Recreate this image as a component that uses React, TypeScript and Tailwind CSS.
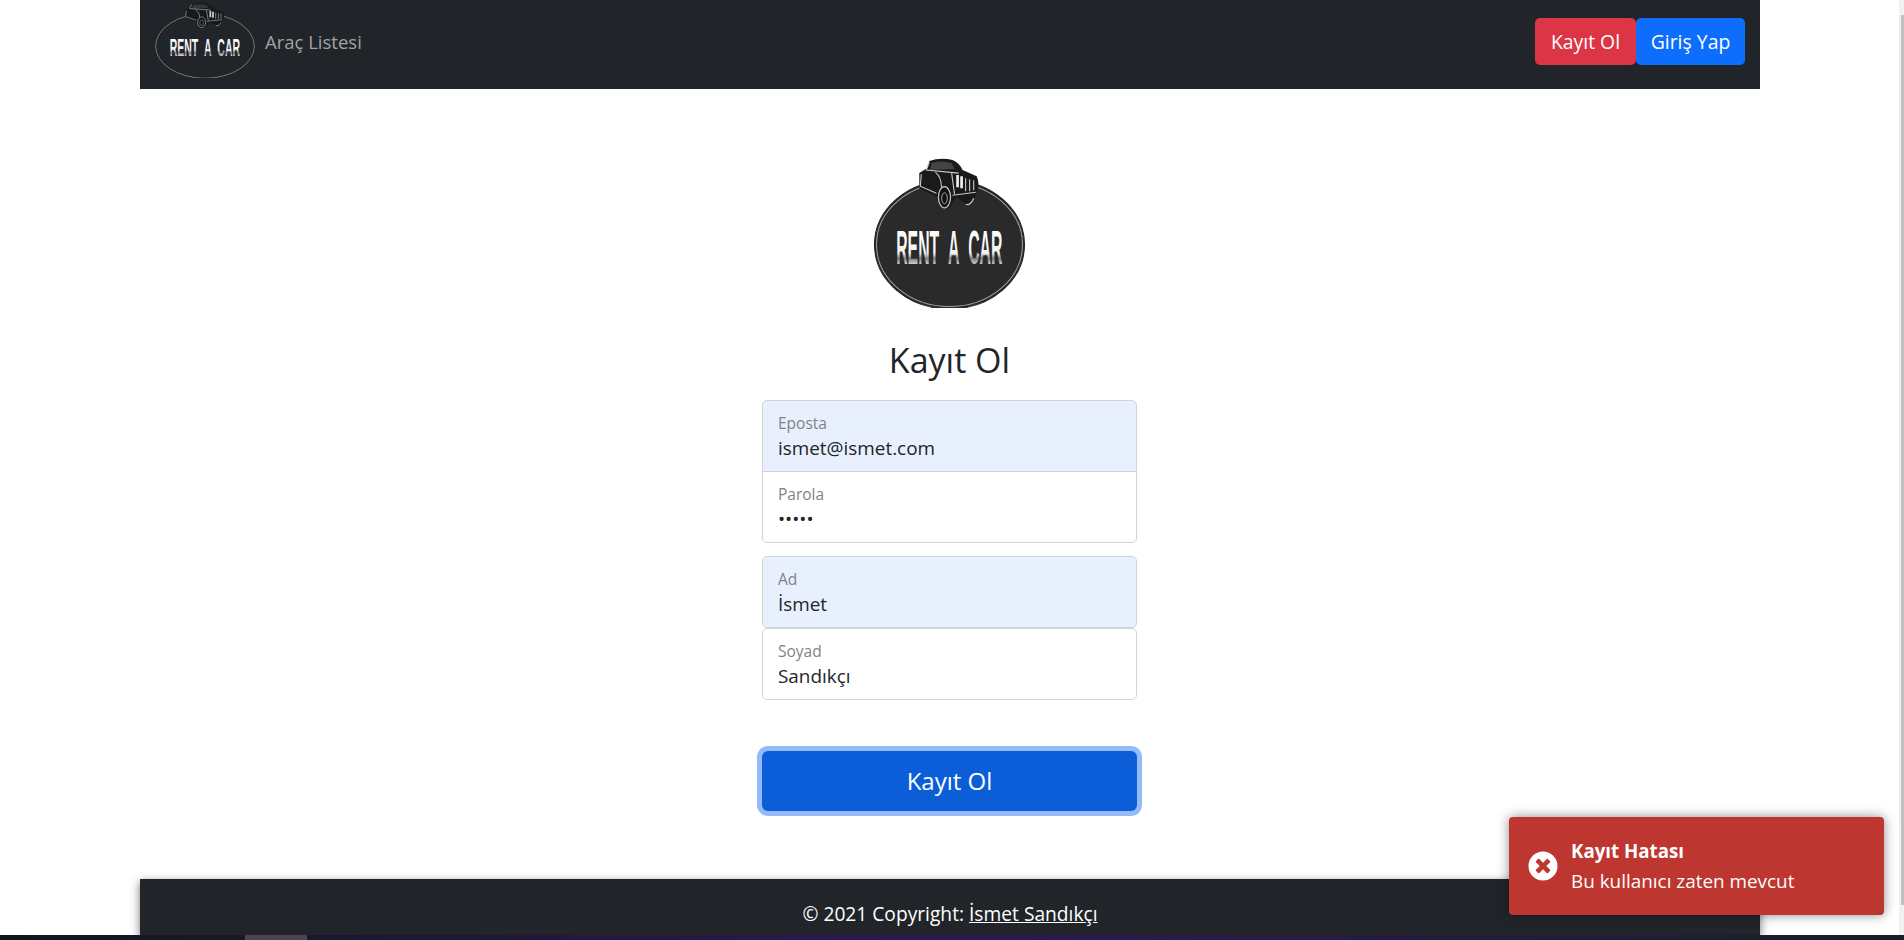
import { FaTimesCircle } from "react-icons/fa";

const font = "font-['Open_Sans','Liberation_Sans',sans-serif]";

const Logo = ({ onDark, className }: { onDark?: boolean; className: string }) => {
  const truckFill = onDark ? "#17191c" : "#1a1a1a";
  const shine = onDark ? "#a9abad" : "#c9c9c9";
  const gradient = onDark ? "letterSmall" : "letterBig";
  return (
    <svg viewBox="0 0 150 150" preserveAspectRatio="none" className={className}>
      <defs>
        <linearGradient id={gradient} x1="0" y1="0" x2="0" y2="1">
          <stop offset="0" stopColor="#ffffff" />
          <stop offset="0.6" stopColor="#f2f2f2" />
          <stop offset="0.7" stopColor="#7d7d7d" />
          <stop offset="0.84" stopColor="#e8e8e8" />
          <stop offset="1" stopColor="#ffffff" />
        </linearGradient>
      </defs>
      <ellipse cx="75" cy="87" rx="74.5" ry="64" fill={onDark ? "#212529" : "#2a2a2a"} stroke={onDark ? "none" : "#1c1c1c"} />
      <ellipse
        cx="75"
        cy="87"
        rx={onDark ? 74 : 72.5}
        ry={onDark ? 63.5 : 61.5}
        fill="none"
        stroke={onDark ? "#85888a" : "#a0a0a0"}
        strokeWidth={onDark ? 1.4 : 1}
      />
      {/* truck */}
      <path
        d="M55 4 Q66 0 78 3 Q85 6 88 13 L102 19 Q105 26 103 33 L97 48 L90 46 L82 40 L75 51 L67 51 L63 40 L45 31 L45 16 L53 11 Z"
        fill={truckFill}
      />
      <path d="M57 6 Q66 3 77 6 L80 12 L56 13 Z" fill={onDark ? "#34373b" : "#444444"} />
      <path d="M47 17 L46 29 L62 36 M55 5 L52 13 L84 16 M61 15 Q67 20 67 30 M77 15 L80 37" stroke={shine} strokeWidth="1.1" fill="none" />
      <path d="M83 18 L83 30 M87 19 L87 31" stroke={onDark ? "#d0d1d2" : "#f4f4f4"} strokeWidth="2.6" />
      <path d="M91 21 L91 34 M95 22 L95 34 M99 23 L99 33" stroke={shine} strokeWidth="1.1" />
      <path d="M78 38 L101 35" stroke={shine} strokeWidth="1" fill="none" />
      <ellipse cx="70" cy="40" rx="6" ry="10.5" fill="#111" stroke={shine} strokeWidth="1.2" />
      <ellipse cx="70" cy="41" rx="2.8" ry="5.5" fill="none" stroke={shine} strokeWidth="0.8" />
      <path d="M91 47 Q96 49 99 41" fill="none" stroke={shine} strokeWidth="1.2" />
      <text
        transform="translate(22 106) scale(1.1 2.94)"
        textLength="96"
        lengthAdjust="spacingAndGlyphs"
        wordSpacing="5"
        fontFamily="'Liberation Sans', sans-serif"
        fontWeight="700"
        fontSize="16"
        fill={`url(#${gradient})`}
      >
        RENT A CAR
      </text>
    </svg>
  );
};

const Field = ({
  label,
  value,
  type = "text",
  filled,
  rounded,
}: {
  label: string;
  value: string;
  type?: string;
  filled?: boolean;
  rounded: string;
}) => (
  <div className={`flex h-[72px] flex-col justify-center border border-[#ced4da] pl-[15px] pr-4 ${filled ? "bg-[#e8f0fe]" : "bg-white"} ${rounded}`}>
    <label className="text-[15.5px] leading-[22px] text-[#7f8387]">{label}</label>
    <input
      type={type}
      defaultValue={value}
      readOnly
      className="mt-[1px] h-[26px] w-full bg-transparent text-[18.9px] leading-[26px] text-[#212529] outline-none"
    />
  </div>
);

export default function App() {
  return (
    <div className={`relative flex h-[940px] w-full flex-col overflow-hidden bg-white ${font}`}>
      <div className="flex h-[935px] min-h-0">
        <div className="min-w-0 flex-1">
          <div className="ml-[140px] flex h-[935px] w-[1620px] flex-col">
            <nav className="flex h-[89px] items-start justify-between bg-[#212529] pl-[15px] pr-[15px]">
              <div className="flex items-center">
                <Logo onDark className="mt-[2px] h-[76px] w-[100px]" />
                <a href="#" className="ml-[10px] mt-[5px] text-[18.5px] text-[#a0a2a4]">
                  Araç Listesi
                </a>
              </div>
              <div className="mt-[18px] flex">
                <button className="h-[47px] w-[101px] rounded-[5px] bg-[#dc3545] text-[19.4px] text-white">Kayıt Ol</button>
                <button className="h-[47px] w-[109px] rounded-[5px] bg-[#0d6efd] text-[19.4px] text-white">Giriş Yap</button>
              </div>
            </nav>

            <main className="flex flex-1 flex-col items-center pr-[1px] pt-[68px]">
              <Logo className="h-[151px] w-[151px]" />
              <h1 className="mb-[19px] mt-[31px] text-[34px] leading-[42px] text-[#212529]">Kayıt Ol</h1>
              <form className="w-[375px]">
                <div className="mb-[13px]">
                  <Field label="Eposta" value="ismet@ismet.com" filled rounded="rounded-t-[5px]" />
                  <Field label="Parola" value="12345" type="password" rounded="-mt-px rounded-b-[5px]" />
                </div>
                <Field label="Ad" value="İsmet" filled rounded="rounded-[5px]" />
                <Field label="Soyad" value="Sandıkçı" rounded="rounded-[5px]" />
                <button
                  type="button"
                  className="mt-[51px] h-[60px] w-full rounded-[6px] bg-[#0b5ed7] text-[24px] text-white ring-[5px] ring-[#93bbf9]"
                >
                  Kayıt Ol
                </button>
              </form>
            </main>

            <footer className="h-[56px] bg-[#212529] pt-[22px] text-center text-[19.2px] leading-[26px] text-white shadow-[0_3px_9px_rgba(0,0,0,0.55)]">
              © 2021 Copyright: <a href="#" className="underline">İsmet Sandıkçı</a>
            </footer>
          </div>
        </div>
        <div className="w-[5px] bg-[#f1f1f1] pl-[2px]">
          <div className="mt-[15px] h-[890px] bg-[#c1c1c1]" />
        </div>
      </div>

      {/* taskbar sliver at the bottom of the capture */}
      <div className="flex h-[5px] bg-gradient-to-r from-[#14141c] via-[#2a1a55] to-[#1c1c28] pl-[245px]">
        <div className="h-full w-[62px] bg-[#4a4650]" />
      </div>

      <div className="absolute bottom-[25px] right-[20px] flex h-[98px] w-[375px] items-center gap-[13px] rounded-[4px] bg-[#bd362f] pl-[19px] text-white shadow-[0_0_12px_rgba(0,0,0,0.45)]">
        <FaTimesCircle className="size-[30px] shrink-0" />
        <div>
          <div className="text-[18.7px] font-bold leading-[30px]">Kayıt Hatası</div>
          <div className="text-[18.9px] leading-[30px]">Bu kullanıcı zaten mevcut</div>
        </div>
      </div>
    </div>
  );
}
